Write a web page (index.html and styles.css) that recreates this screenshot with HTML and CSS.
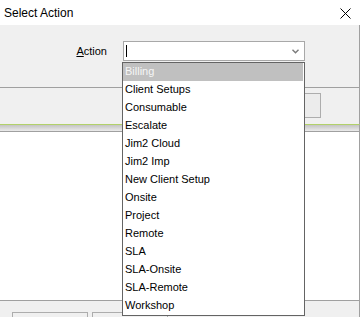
FILE: index.html
```html
<!DOCTYPE html>
<html lang="en">
<head>
  <meta charset="UTF-8" />
  <meta name="viewport" content="width=device-width, initial-scale=1.0"/>
  <title>Select Action</title>
  <link rel="stylesheet" href="styles.css">
</head>
<body>
<div class="window">
  <!-- Dialog on top -->
  <div class="titlebar">
    <span class="title">Select Action</span>
    <svg class="close" width="11" height="11" viewBox="0 0 11 11">
      <path d="M0.5 0.5 L10.5 10.5 M10.5 0.5 L0.5 10.5" stroke="#000" stroke-width="1" fill="none"/>
    </svg>
  </div>
  <div class="dialog-body framed">
    <div class="field-row">
      <label class="field-label"><u>A</u>ction</label>
      <div class="combo">
        <span class="caret"></span>
        <svg class="chevron" width="7" height="5" viewBox="0 0 7 5">
          <path d="M0.5 0.8 L3.5 3.8 L6.5 0.8" stroke="#7a7a7a" stroke-width="1.4" fill="none"/>
        </svg>
      </div>
    </div>
  </div>
  <div class="dialog-buttons framed">
    <div class="btn"></div>
  </div>
  <div class="shadow framed"></div>

  <!-- Window behind -->
  <div class="back-content framed"></div>
  <div class="back-footer framed">
    <div class="btn"></div>
    <div class="btn"></div>
  </div>

  <!-- Open combo list -->
  <ul class="dropdown">
    <li class="selected">Billing</li>
    <li>Client Setups</li>
    <li>Consumable</li>
    <li>Escalate</li>
    <li>Jim2 Cloud</li>
    <li>Jim2 Imp</li>
    <li>New Client Setup</li>
    <li>Onsite</li>
    <li>Project</li>
    <li>Remote</li>
    <li>SLA</li>
    <li>SLA-Onsite</li>
    <li>SLA-Remote</li>
    <li>Workshop</li>
  </ul>
</div>
</body>
</html>
```

FILE: styles.css
```css
body {
  margin: 0;
  padding: 0;
  background: #ffffff;
  font-family: 'Liberation Sans', Arial, sans-serif;
  font-size: 11px;
  color: #000;
}

.window {
  position: relative;
  width: 361px;
  height: 317px;
  overflow: hidden;
  display: flex;
  flex-direction: column;
}

.framed {
  margin-right: 1px;
  border-right: 1px solid #a0a0a0;
}

.titlebar {
  height: 25px;
  flex: none;
  background: #ffffff;
  display: flex;
  align-items: center;
  justify-content: space-between;
  padding: 0 10px 0 4px;
}

.title {
  font-size: 12px;
}

.close {
  display: block;
  margin-top: 1px;
}

.dialog-body {
  flex: none;
  background: #f0f0f0;
  border-bottom: 1px solid #a0a0a0;
  padding-top: 16px;
  box-sizing: border-box;
  height: 63px;
}

.field-row {
  display: flex;
  align-items: center;
  gap: 16px;
}

.field-label {
  width: 107px;
  text-align: right;
}

.combo {
  width: 182px;
  height: 20px;
  box-sizing: border-box;
  border: 1px solid #a8a8a8;
  background: #ffffff;
  display: flex;
  align-items: center;
  justify-content: space-between;
  padding: 0 5px 0 2px;
}

.caret {
  width: 1px;
  height: 12px;
  background: #000;
}

.chevron {
  display: block;
  margin-top: 1px;
}

.dialog-buttons {
  height: 37px;
  flex: none;
  box-sizing: border-box;
  background: #f0f0f0;
  border-bottom: 1px solid #b2d16a;
  padding: 5px 38px 0 0;
  display: flex;
  justify-content: flex-end;
}

.btn {
  width: 75px;
  height: 25px;
  box-sizing: border-box;
  border: 1px solid #adadad;
  background: #ececec;
}

.shadow {
  height: 6px;
  flex: none;
  background: linear-gradient(#c4c4c4, #ebebeb);
}

.back-content {
  height: 170px;
  flex: none;
  box-sizing: border-box;
  background: #ffffff;
  border-top: 1px solid #a0a0a0;
  border-bottom: 1px solid #a0a0a0;
}

.back-footer {
  flex: 1;
  background: #f0f0f0;
  display: flex;
  gap: 4px;
  padding: 11px 0 0 12px;
}

.back-footer .btn {
  width: 76px;
  height: 30px;
  background: #f0f0f0;
}

.dropdown {
  position: absolute;
  left: 122px;
  top: 62px;
  width: 183px;
  margin: 0;
  padding: 0;
  list-style: none;
  box-sizing: border-box;
  border: 1px solid #646464;
  background: #ffffff;
}

.dropdown li {
  height: 18px;
  line-height: 16px;
  padding: 0 0 2px 2px;
  box-sizing: border-box;
  white-space: nowrap;
}

.dropdown li.selected {
  background: #c0c0c0;
  color: #f6f6f6;
  margin-right: 1px;
}
```
